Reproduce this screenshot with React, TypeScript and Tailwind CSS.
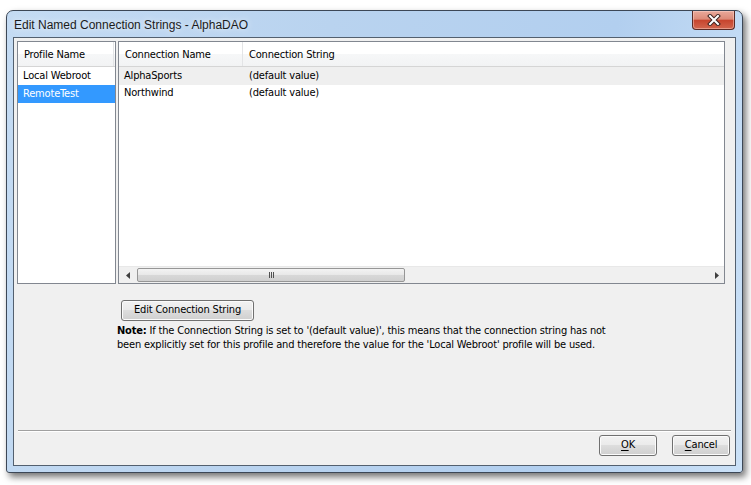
const font = "font-['DejaVu_Sans_Condensed','Liberation_Sans',sans-serif] tracking-[-0.18px]";

const btn =
  "flex items-center justify-center rounded-[3px] border border-[#707070] bg-[linear-gradient(#f2f2f2_0%,#ebebeb_45%,#dddddd_50%,#cfcfcf_100%)] shadow-[inset_0_0_0_1px_#fbfbfb] text-[11px] text-black";

function CloseButton() {
  return (
    <div className="w-[43px] h-[19px] rounded-b-[4px] border border-t-0 border-[#5a2a25] bg-[linear-gradient(#e9a99b_0%,#dc8a78_45%,#c7452e_52%,#d2664e_100%)] shadow-[inset_0_0_0_1px_rgba(255,220,210,0.45)] flex items-center justify-center">
      <svg width="14" height="12" viewBox="0 0 14 12">
        <path d="M3 2 L11 10 M11 2 L3 10" stroke="#3d2320" strokeWidth="4" strokeLinecap="square" />
        <path d="M3 2 L11 10 M11 2 L3 10" stroke="#ffffff" strokeWidth="2" strokeLinecap="square" />
      </svg>
    </div>
  );
}

function HeaderCell({ label, className = '' }: { label: string; className?: string }) {
  return (
    <div className={`h-full flex items-center pl-[6px] pt-[2px] border-r border-[#e3e4e6] ${className}`}>
      {label}
    </div>
  );
}

const rows = [
  { name: 'AlphaSports', value: '(default value)', shaded: true },
  { name: 'Northwind', value: '(default value)', shaded: false },
];

function ScrollBar() {
  return (
    <div className="h-[17px] bg-[#f0f0f0] border-t border-[#e8e8e8] flex items-center">
      <div className="w-[17px] h-full flex items-center justify-center">
        <svg width="4" height="7" viewBox="0 0 4 7">
          <path d="M4 0 L0 3.5 L4 7 Z" fill="#404040" />
        </svg>
      </div>
      <div className="w-[268px] h-[14px] ml-[1px] rounded-[2px] border border-[#969696] bg-[linear-gradient(#f3f3f3_0%,#e8e8e8_50%,#d8d8d8_51%,#d0d0d0_100%)] flex items-center justify-center">
        <div className="flex gap-[1px]">
          <div className="w-[1px] h-[6px] bg-[#505050]" />
          <div className="w-[1px] h-[6px] bg-[#505050]" />
          <div className="w-[1px] h-[6px] bg-[#505050]" />
        </div>
      </div>
      <div className="flex-1" />
      <div className="w-[17px] h-full flex items-center justify-center mr-[-1px]">
        <svg width="4" height="7" viewBox="0 0 4 7">
          <path d="M0 0 L4 3.5 L0 7 Z" fill="#404040" />
        </svg>
      </div>
    </div>
  );
}

export default function App() {
  return (
    <div className={`w-[751px] h-[485px] bg-white overflow-hidden pl-[6px] pt-[10px] ${font}`}>
      <div className="w-[737px] h-[463px] flex flex-col border border-[#3c4756] rounded-t-[7px] rounded-b-[3px] bg-[linear-gradient(100deg,#c4dbf3_0%,#b9d3ef_40%,#b2cfef_75%,#cbe1f7_100%)] shadow-[3px_4px_7px_rgba(0,0,0,0.55)]">
        {/* Title bar */}
        <div className="h-[26px] flex items-start justify-between">
          <span className="pl-[7px] pt-[7px] text-[12px] leading-[15px] tracking-normal text-[#1b1b1b] font-['Liberation_Sans',sans-serif] [text-shadow:0_0_6px_rgba(255,255,255,0.9)]">
            Edit Named Connection Strings - AlphaDAO
          </span>
          <div className="mr-[7px]">
            <CloseButton />
          </div>
        </div>

        {/* Client area */}
        <div className="flex-1 mx-[6px] mb-[6px] border border-[#53606f] bg-[#f0f0f0] flex flex-col text-[11px] text-black">
          <div className="flex pt-[3px] pl-[3px] gap-[2px]">
            {/* Profiles list */}
            <div className="w-[99px] h-[243px] border border-[#828790] bg-white flex flex-col">
              <div className="h-[25px] bg-[linear-gradient(#ffffff_0%,#ffffff_50%,#f6f7f8_51%,#f2f3f4_100%)] border-b border-[#d5d5d5]">
                <HeaderCell label="Profile Name" className="w-[96px]" />
              </div>
              <div className="h-[17px] mt-[1px] flex items-center pl-[5px]">Local Webroot</div>
              <div className="h-[18px] flex items-center pl-[5px] bg-[#3399ff] text-white">RemoteTest</div>
            </div>

            {/* Connections list */}
            <div className="w-[607px] h-[243px] border border-[#828790] bg-white flex flex-col">
              <div className="h-[25px] flex bg-[linear-gradient(#ffffff_0%,#ffffff_50%,#f6f7f8_51%,#f2f3f4_100%)] border-b border-[#d5d5d5]">
                <HeaderCell label="Connection Name" className="w-[124px]" />
                <HeaderCell label="Connection String" className="flex-1 border-r-0" />
              </div>
              {rows.map((r) => (
                <div
                  key={r.name}
                  className={`flex items-center ${r.shaded ? 'bg-[#efefef] h-[18px] pt-[1px]' : 'h-[17px]'}`}
                >
                  <div className="w-[124px] pl-[5px]">{r.name}</div>
                  <div className="pl-[6px]">{r.value}</div>
                </div>
              ))}
              <div className="flex-1" />
              <ScrollBar />
            </div>
          </div>

          {/* Edit button + note */}
          <div className="pl-[103px] mt-[16px]">
            <button className={`${btn} w-[133px] h-[21px] ml-[4px]`}>Edit Connection String</button>
            <p className="mt-[3px] leading-[14px] text-black">
              <b>Note:</b> If the Connection String is set to '(default value)', this means that the connection string has not
              <br />
              been explicitly set for this profile and therefore the value for the 'Local Webroot' profile will be used.
            </p>
          </div>

          {/* Separator + dialog buttons */}
          <div className="mt-auto mx-[4px] h-[1px] bg-[#a0a0a0] border-b border-white box-content" />
          <div className="flex justify-end gap-[15px] mt-[3px] mb-[9px] mr-[5px]">
            <button className={`${btn} w-[58px] h-[21px]`}>
              <span className="underline underline-offset-2">O</span>K
            </button>
            <button className={`${btn} w-[58px] h-[21px]`}>
              <span className="underline underline-offset-2">C</span>ancel
            </button>
          </div>
        </div>
      </div>
    </div>
  );
}
